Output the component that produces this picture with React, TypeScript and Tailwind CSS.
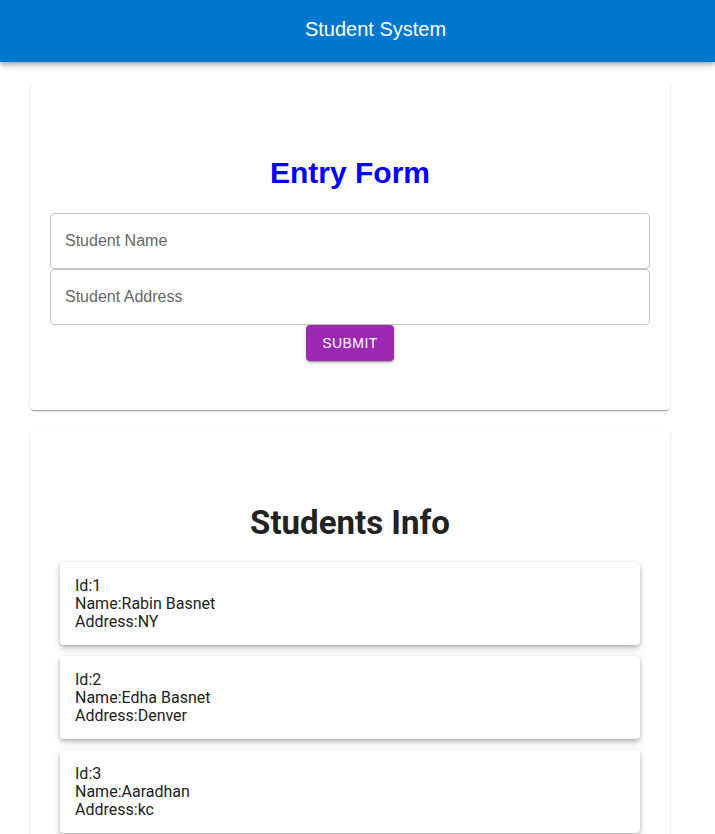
const students = [
  { id: 1, name: "Rabin Basnet", address: "NY" },
  { id: 2, name: "Edha Basnet", address: "Denver" },
  { id: 3, name: "Aaradhan", address: "kc" },
];

function StudentCard({ id, name, address }: { id: number; name: string; address: string }) {
  return (
    <div className="rounded-[4px] bg-white px-[15px] pt-[15px] pb-[14px] text-[16px] leading-[18px] text-[#222] shadow-[0_3px_6px_rgba(0,0,0,0.25),0_1px_3px_rgba(0,0,0,0.12)]">
      <div>Id:{id}</div>
      <div>Name:{name}</div>
      <div>Address:{address}</div>
    </div>
  );
}

export default function App() {
  return (
    <div className="min-h-screen bg-white font-['Liberation_Sans',Arial,sans-serif]">
      <header className="flex h-[62px] items-center justify-center bg-[#0077cf] pl-[36px] pb-[4px] text-[20px] text-white shadow-[0_2px_4px_-1px_rgba(0,0,0,0.2),0_4px_5px_rgba(0,0,0,0.14),0_1px_10px_rgba(0,0,0,0.12)]">
        Student System
      </header>

      <main className="ml-[30px] flex w-[640px] flex-col gap-[21px] pt-[20px]">
        <section className="rounded-[4px] bg-white px-5 pt-[73px] pb-[49px] shadow-[0_2px_1px_-1px_rgba(0,0,0,0.2),0_1px_1px_rgba(0,0,0,0.14),0_1px_3px_rgba(0,0,0,0.12)]">
          <h1 className="text-center text-[30px] leading-[36px] font-bold text-[#0000ff]">Entry Form</h1>
          <form className="mt-[22px] flex flex-col items-center" onSubmit={(e) => e.preventDefault()}>
            <input
              placeholder="Student Name"
              className="h-[56px] w-full rounded-[4px] border border-[#c4c4c4] px-[14px] text-[16px] placeholder:text-[#666] outline-none"
            />
            <input
              placeholder="Student Address"
              className="h-[56px] w-full rounded-[4px] border border-[#c4c4c4] px-[14px] text-[16px] placeholder:text-[#666] outline-none"
            />
            <button
              type="submit"
              className="h-[36px] w-[88px] rounded-[4px] bg-[#9c27b0] text-[14px] tracking-[0.4px] text-white shadow-[0_3px_1px_-2px_rgba(0,0,0,0.2),0_2px_2px_rgba(0,0,0,0.14),0_1px_5px_rgba(0,0,0,0.12)]"
            >
              SUBMIT
            </button>
          </form>
        </section>

        <section className="rounded-[4px] bg-white px-[30px] pt-[74px] pb-[30px] font-['Roboto',sans-serif] shadow-[0_2px_1px_-1px_rgba(0,0,0,0.2),0_1px_1px_rgba(0,0,0,0.14),0_1px_3px_rgba(0,0,0,0.12)]">
          <h1 className="text-center text-[33px] leading-[36px] font-bold text-[#222]">Students Info</h1>
          <div className="mt-[21px] flex flex-col gap-[11px]">
            {students.map((s) => (
              <StudentCard key={s.id} {...s} />
            ))}
          </div>
        </section>
      </main>
    </div>
  );
}
